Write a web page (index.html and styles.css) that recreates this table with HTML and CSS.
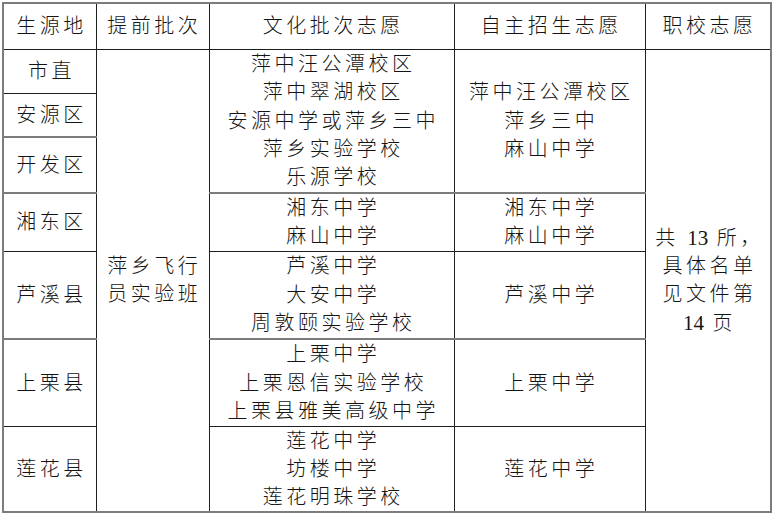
FILE: index.html
```html
<!DOCTYPE html>
<html lang="zh-CN">
<head>
<meta charset="utf-8">
<title>志愿表</title>
<link rel="stylesheet" href="styles.css">
</head>
<body>
<div class="page">
<table class="grid">
  <colgroup>
    <col class="c1"><col class="c2"><col class="c3"><col class="c4"><col class="c5">
  </colgroup>
  <tr class="r-head">
    <th>生源地</th>
    <th>提前批次</th>
    <th>文化批次志愿</th>
    <th>自主招生志愿</th>
    <th>职校志愿</th>
  </tr>
  <tr class="r1">
    <td>市直</td>
    <td rowspan="7">萍乡飞行<br>员实验班</td>
    <td rowspan="3">萍中汪公潭校区<br>萍中翠湖校区<br>安源中学或萍乡三中<br>萍乡实验学校<br>乐源学校</td>
    <td rowspan="3">萍中汪公潭校区<br>萍乡三中<br>麻山中学</td>
    <td rowspan="7" class="note">共 <span class="num">13</span> 所，<br>具体名单<br>见文件第<br><span class="num">14</span> 页</td>
  </tr>
  <tr class="r2">
    <td>安源区</td>
  </tr>
  <tr class="r3 thick">
    <td>开发区</td>
  </tr>
  <tr class="r4 thick">
    <td>湘东区</td>
    <td>湘东中学<br>麻山中学</td>
    <td>湘东中学<br>麻山中学</td>
  </tr>
  <tr class="r5">
    <td>芦溪县</td>
    <td>芦溪中学<br>大安中学<br>周敦颐实验学校</td>
    <td>芦溪中学</td>
  </tr>
  <tr class="r6 thick">
    <td>上栗县</td>
    <td>上栗中学<br>上栗恩信实验学校<br>上栗县雅美高级中学</td>
    <td>上栗中学</td>
  </tr>
  <tr class="r7">
    <td>莲花县</td>
    <td>莲花中学<br>坊楼中学<br>莲花明珠学校</td>
    <td>莲花中学</td>
  </tr>
</table>
</div>
</body>
</html>
```

FILE: styles.css
```css
html, body {
  margin: 0;
  padding: 0;
  background: #ffffff;
}

.page {
  padding: 2px 0 0 2px;
}

.grid {
  border-collapse: collapse;
  table-layout: fixed;
  width: 768px;
  border: 2px solid #7c7c7c;
  font-family: "Liberation Serif", "Noto Sans CJK SC", serif;
  font-weight: 300;
  font-size: 20px;
  line-height: 28.3px;
  color: #141414;
  letter-spacing: 3.5px;
}

.c1 { width: 93px; }
.c2 { width: 113px; }
.c3 { width: 245px; }
.c4 { width: 191px; }
.c5 { width: 126px; }

.grid th,
.grid td {
  border: 1px solid #1e1e1e;
  padding: 0 0 0 3.5px;
  text-align: center;
  vertical-align: middle;
  font-weight: 300;
  white-space: nowrap;
}

.r-head { height: 46px; }
.r1 { height: 44px; }
.r2 { height: 44px; }
.r3 { height: 56px; }
.r4 { height: 58px; }
.r5 { height: 88px; }
.r6 { height: 87px; }
.r7 { height: 86px; }

.thick > td {
  border-top: 2px solid #7c7c7c;
}

.note {
  line-height: 28.4px;
}

.num {
  letter-spacing: 0;
  font-size: 21px;
}
```
